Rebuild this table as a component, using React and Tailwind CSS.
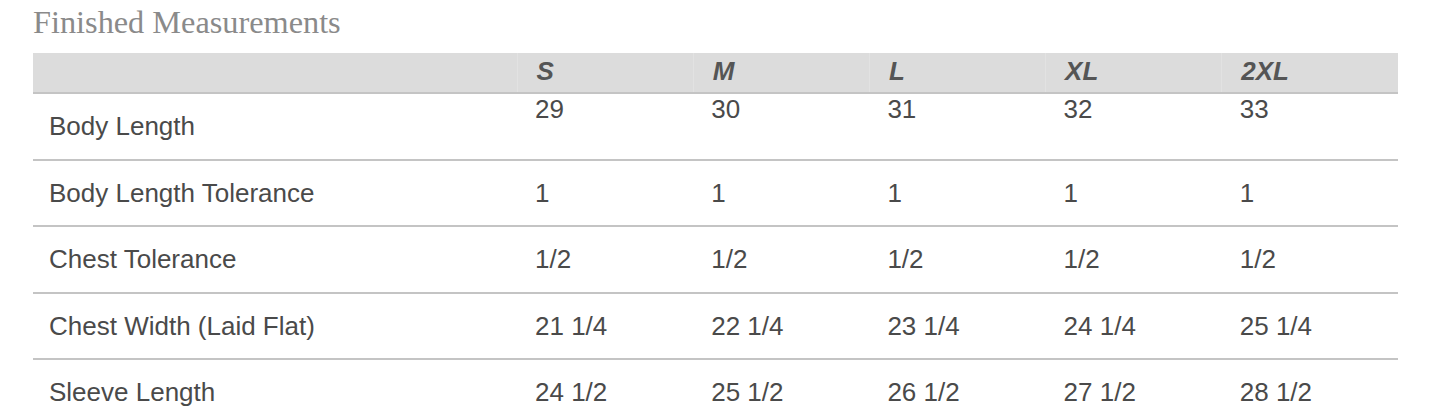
import React from "react";

const sizes = ["S", "M", "L", "XL", "2XL"];
const rows = [
  { label: "Body Length", values: ["29", "30", "31", "32", "33"], top: true },
  { label: "Body Length Tolerance", values: ["1", "1", "1", "1", "1"] },
  { label: "Chest Tolerance", values: ["1/2", "1/2", "1/2", "1/2", "1/2"] },
  { label: "Chest Width (Laid Flat)", values: ["21 1/4", "22 1/4", "23 1/4", "24 1/4", "25 1/4"] },
  { label: "Sleeve Length", values: ["24 1/2", "25 1/2", "26 1/2", "27 1/2", "28 1/2"] },
];

export default function App() {
  return (
    <div className="w-[1445px] h-[413px] overflow-hidden bg-white pl-[33px]">
      <h2 className="pt-[4px] h-[53px] text-[32.3px] leading-[37px] text-[#8a8a8a] font-normal font-['Liberation_Serif',serif]">
        Finished Measurements
      </h2>
      <table className="w-[1365px] table-fixed border-collapse font-['Liberation_Sans',Arial,sans-serif] text-[26px] text-[#4a4a4a]">
        <colgroup>
          <col className="w-[484px]" />
          {sizes.map((s) => (
            <col key={s} className="w-[176.2px]" />
          ))}
        </colgroup>
        <thead>
          <tr className="bg-[#dcdcdc] border-b-2 border-[#c4c4c4]">
            <th className="h-[40px] p-0"></th>
            {sizes.map((s) => (
              <th
                key={s}
                className="h-[40px] pl-[19px] pt-[3px] align-top text-left font-bold italic text-[#555555] leading-[30px] border-l border-[#e2e2e2]"
              >
                {s}
              </th>
            ))}
          </tr>
        </thead>
        <tbody>
          {rows.map((r) => (
            <tr key={r.label} className="border-b-2 border-[#c4c4c4]">
              <td className="h-[66.5px] pl-[16px] leading-[30px] align-middle">{r.label}</td>
              {r.values.map((v, i) => (
                <td
                  key={i}
                  className={`h-[66.5px] pl-[18px] leading-[30px] ${r.top ? "align-top pt-0" : "align-middle"}`}
                >
                  {v}
                </td>
              ))}
            </tr>
          ))}
        </tbody>
      </table>
    </div>
  );
}
